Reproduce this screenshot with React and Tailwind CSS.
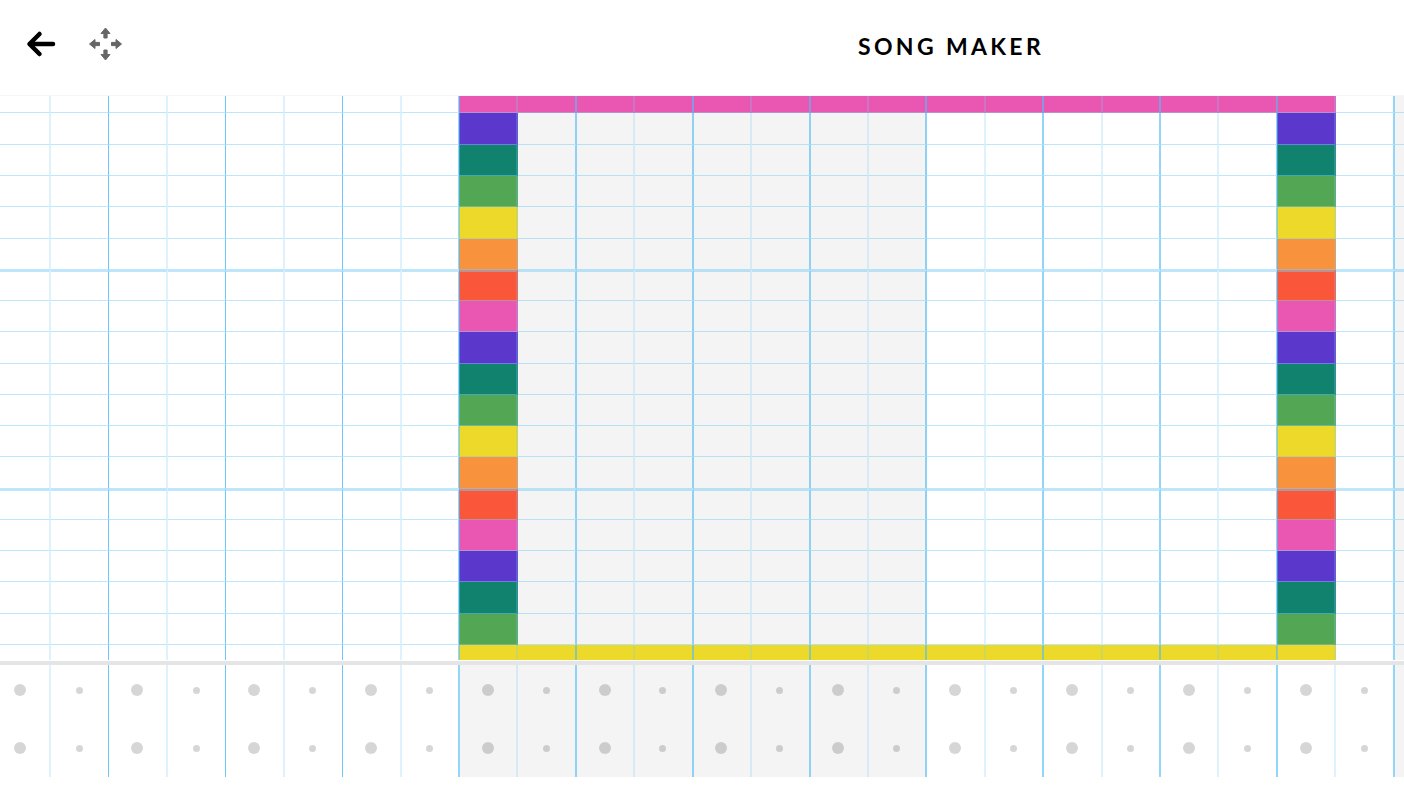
import React from 'react';

const COLUMNS = Array.from({ length: 25 }, (_, i) => i);
const ROWS = [
  'bg-[#ea57b2]',
  'bg-[#5b37cc]',
  'bg-[#11826d]',
  'bg-[#53a654]',
  'bg-[#edd929]',
  'bg-[#f9923d]',
  'bg-[#fa5639]',
  'bg-[#ea57b2]',
  'bg-[#5b37cc]',
  'bg-[#11826d]',
  'bg-[#53a654]',
  'bg-[#edd929]',
  'bg-[#f9923d]',
  'bg-[#fa5639]',
  'bg-[#ea57b2]',
  'bg-[#5b37cc]',
  'bg-[#11826d]',
  'bg-[#53a654]',
  'bg-[#edd929]',
];

const isShaded = (col) => (col >= 8 && col < 16) || col >= 24;

// bar lines land on whole pixels on the left of the page, further right they smear over two
const lineClass = (col) => {
  if (col % 2 === 0) return 'border-r-[2px] border-r-[#7ccdf840]';
  return col < 7 ? 'border-r border-r-[#6cc8fb]' : 'border-r-[2px] border-r-[#52bdf7a0]';
};

function NoteCell({ row, col }) {
  const edgeRow = row === 0 || row === 18;
  const edgeCol = col === 8 || col === 22;
  const filled = (edgeRow && col >= 8 && col <= 22) || edgeCol;
  const bg = filled ? ROWS[row] : isShaded(col) ? 'bg-[#f4f4f4]' : 'bg-white';
  const bottom = row === 18 ? 'border-b-0' : 'border-b border-b-[#7ccdf87d]';
  const octaveTop = row === 6 || row === 13 ? 'border-t-[2px] border-t-[#7ccdf87d]' : '';
  const leftEdge = edgeCol ? '-ml-px border-l border-l-[#52bdf780]' : '';
  return <div className={`${bg} ${lineClass(col)} ${bottom} ${octaveTop} ${leftEdge}`} />;
}

function BeatColumn({ col }) {
  const dot = col % 2 === 0 ? 'w-3 h-3' : 'w-[7px] h-[7px]';
  return (
    <div className={`${isShaded(col) ? 'bg-[#f4f4f4]' : 'bg-white'} ${lineClass(col)}`}>
      <div className="-mt-1">
        {[0, 1].map((i) => (
          <div key={i} className="h-[58px] pr-px flex items-center justify-center">
            <div className={`${dot} rounded-full bg-[#00000029]`} />
          </div>
        ))}
      </div>
    </div>
  );
}

export default function App() {
  return (
    <div className="w-[1404px] h-[790px] bg-white overflow-hidden">
      {/* Top bar */}
      <header className="h-24 flex items-center border-b border-[#f5f5f5] pb-1">
        <button className="ml-[26px] -mt-[3px] w-[30px] h-[30px] flex items-center justify-center">
          <svg width="30" height="30" viewBox="0 0 30 30" fill="none" stroke="#000" strokeWidth="4.5" strokeLinecap="round" strokeLinejoin="round">
            <path d="M27 15H4" />
            <path d="M13.500 5L3.500 15L13.500 25" />
          </svg>
        </button>
        <button className="ml-[32px] -mt-[3px] w-[36px] h-[36px] flex items-center justify-center">
          <svg width="36" height="36" viewBox="0 0 36 36" fill="#666" stroke="#666" strokeWidth="1" strokeLinejoin="round">
            <path d="M17.500 2L22 7.500H19.100V12H15.900V7.500H13Z" />
            <path d="M17.500 34L22 28.500H19.100V24H15.900V28.500H13Z" />
            <path d="M1.500 18L7 13.500V16.400H11.500V19.600H7V22.500Z" />
            <path d="M33.500 18L28 13.500V16.400H23.500V19.600H28V22.500Z" />
          </svg>
        </button>
        <h1 className="ml-[734px] mt-[2px] text-[23px] font-bold tracking-[0.145em] text-black font-['Lato',sans-serif] whitespace-nowrap">SONG MAKER</h1>
      </header>

      {/* Melody grid */}
      <section className="h-[564px] overflow-hidden">
        <div className="-ml-[7.4px] grid grid-cols-[repeat(25,58.43px)] grid-rows-[17px_31.760px_repeat(16,31.26px)_15.080px] h-[564px]">
          {ROWS.map((_, row) => COLUMNS.map((col) => <NoteCell key={`${row}-${col}`} row={row} col={col} />))}
        </div>
      </section>

      {/* Percussion grid */}
      <section className="mt-px border-t-4 border-[#e5e5e5] h-[116.500px] overflow-hidden">
        <div className="-ml-[7.4px] grid grid-cols-[repeat(25,58.43px)] h-28 border-b border-[#eeeeee]">
          {COLUMNS.map((col) => <BeatColumn key={col} col={col} />)}
        </div>
      </section>
    </div>
  );
}
